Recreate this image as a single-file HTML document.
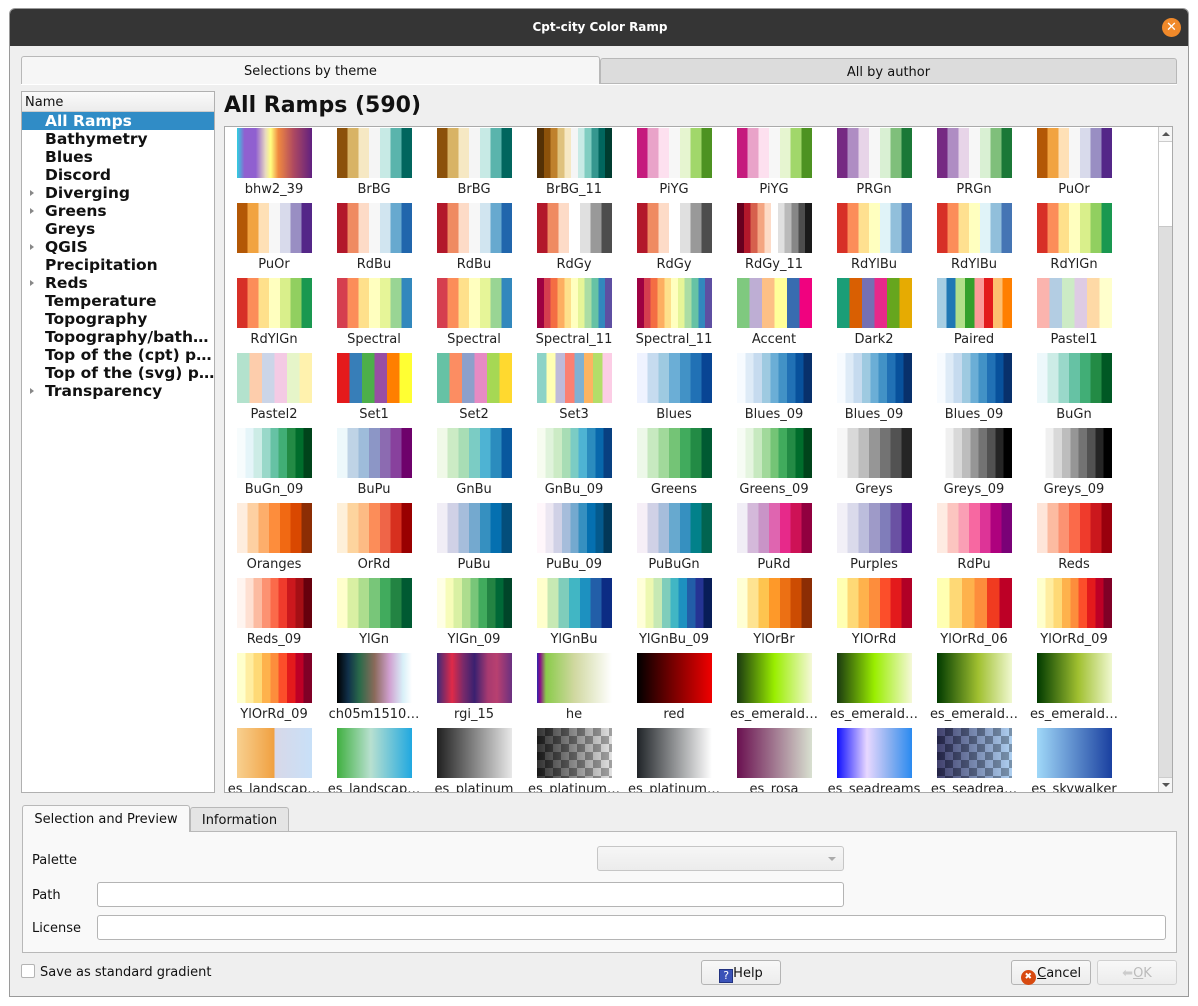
<!DOCTYPE html>
<html><head><meta charset="utf-8">
<style>
*{box-sizing:border-box;margin:0;padding:0}
body{width:1198px;height:1006px;background:#fff;font-family:"DejaVu Sans","Liberation Sans",sans-serif;font-size:13px;color:#111;position:relative;overflow:hidden}
.abs{position:absolute}
#win{left:9px;top:8px;width:1180px;height:989px;background:#efefef;border:1px solid #9a9a9a;border-radius:6px 6px 0 0;overflow:hidden}
#title{left:0;top:0;width:1180px;height:37px;background:#353535;color:#fff;font-weight:bold;font-size:12px;text-align:center;line-height:36px}
#close{left:1152px;top:9px;width:19px;height:19px;border-radius:50%;background:#f0892a;color:#fff;font-size:13px;line-height:19px;text-align:center;font-weight:bold}
.tab{border:1px solid #b8b8b8;border-bottom:none;border-radius:3px 3px 0 0;text-align:center;font-size:13px}
.tree{left:21px;top:91px;width:194px;height:702px;background:#fff;border:1px solid #b0b0b0}
.tree .hd{height:20px;border-bottom:1px solid #ccc;background:linear-gradient(#fafafa,#ececec);padding-left:3px;line-height:21px;font-size:13px}
.tree .it{height:18px;line-height:19px;font-weight:bold;font-size:15.5px;padding-left:23px;position:relative;white-space:nowrap}
.tree .it.sel{background:#308cc6;color:#fff}
.tree .arr{position:absolute;left:8px;top:6px;width:0;height:0;border-left:4px solid #888;border-top:3.5px solid transparent;border-bottom:3.5px solid transparent}
#grid{left:224px;top:126px;width:949px;height:667px;background:#fff;border:1px solid #aaa;overflow:hidden}
.sw{position:absolute;width:75px;height:50px}
.lb{position:absolute;width:100px;text-align:center;font-size:13px;white-space:nowrap;line-height:16px;color:#222}
#sb{left:933px;top:0;width:15px;height:665px;background:#dedede;border-left:1px solid #c8c8c8}
.inp{background:#fff;border:1px solid #b4b4b4;border-radius:3px}
.btn{border:1px solid #b4b4b4;border-radius:3px;background:linear-gradient(#f8f8f8,#ececec);font-size:13px;text-align:center;line-height:25px}
</style></head><body>
<div id="win" class="abs">
 <div id="title" class="abs">Cpt-city Color Ramp</div>
 <div id="close" class="abs">✕</div>
</div>
<div class="abs tab" style="left:21px;top:56px;width:579px;height:28px;background:#f6f6f6;line-height:29px">Selections by theme</div>
<div class="abs tab" style="left:600px;top:58px;width:577px;height:26px;background:#dcdcdc;line-height:27px;border-bottom:1px solid #b8b8b8">All by author</div>
<div class="abs" style="left:21px;top:84px;width:1156px;height:1px;background:#fff"></div>

<div class="abs tree">
 <div class="hd">Name</div>
 <div class="it sel">All Ramps</div>
 <div class="it">Bathymetry</div>
 <div class="it">Blues</div>
 <div class="it">Discord</div>
 <div class="it"><span class="arr"></span>Diverging</div>
 <div class="it"><span class="arr"></span>Greens</div>
 <div class="it">Greys</div>
 <div class="it"><span class="arr"></span>QGIS</div>
 <div class="it">Precipitation</div>
 <div class="it"><span class="arr"></span>Reds</div>
 <div class="it">Temperature</div>
 <div class="it">Topography</div>
 <div class="it">Topography/bath…</div>
 <div class="it">Top of the (cpt) p…</div>
 <div class="it">Top of the (svg) p…</div>
 <div class="it"><span class="arr"></span>Transparency</div>
</div>
<div class="abs" style="left:224px;top:91px;font-size:22px;font-weight:bold;line-height:30px">All Ramps (590)</div>

<div id="grid" class="abs">
 <div id="cells"></div>
 <div id="sb" class="abs">
  <div class="abs" style="left:0;top:0;width:14px;height:15px;background:#f6f6f6;border-bottom:1px solid #ccc"><div class="abs" style="left:3px;top:5px;border-bottom:4px solid #555;border-left:4px solid transparent;border-right:4px solid transparent"></div></div>
  <div class="abs" style="left:0;top:15px;width:14px;height:85px;background:#fff;border-bottom:1px solid #c8c8c8"></div>
  <div class="abs" style="left:0;top:650px;width:14px;height:15px;background:#f6f6f6;border-top:1px solid #ccc"><div class="abs" style="left:3px;top:5px;border-top:4px solid #555;border-left:4px solid transparent;border-right:4px solid transparent"></div></div>
 </div>
</div>

<div id="labels" class="abs" style="left:224px;top:129px;width:932px;height:663px;overflow:hidden">
<div class="lb" style="left:0px;top:53px">bhw2_39</div><div class="lb" style="left:100px;top:53px">BrBG</div><div class="lb" style="left:200px;top:53px">BrBG</div><div class="lb" style="left:300px;top:53px">BrBG_11</div><div class="lb" style="left:400px;top:53px">PiYG</div><div class="lb" style="left:500px;top:53px">PiYG</div><div class="lb" style="left:600px;top:53px">PRGn</div><div class="lb" style="left:700px;top:53px">PRGn</div><div class="lb" style="left:800px;top:53px">PuOr</div>
<div class="lb" style="left:0px;top:128px">PuOr</div><div class="lb" style="left:100px;top:128px">RdBu</div><div class="lb" style="left:200px;top:128px">RdBu</div><div class="lb" style="left:300px;top:128px">RdGy</div><div class="lb" style="left:400px;top:128px">RdGy</div><div class="lb" style="left:500px;top:128px">RdGy_11</div><div class="lb" style="left:600px;top:128px">RdYlBu</div><div class="lb" style="left:700px;top:128px">RdYlBu</div><div class="lb" style="left:800px;top:128px">RdYlGn</div>
<div class="lb" style="left:0px;top:203px">RdYlGn</div><div class="lb" style="left:100px;top:203px">Spectral</div><div class="lb" style="left:200px;top:203px">Spectral</div><div class="lb" style="left:300px;top:203px">Spectral_11</div><div class="lb" style="left:400px;top:203px">Spectral_11</div><div class="lb" style="left:500px;top:203px">Accent</div><div class="lb" style="left:600px;top:203px">Dark2</div><div class="lb" style="left:700px;top:203px">Paired</div><div class="lb" style="left:800px;top:203px">Pastel1</div>
<div class="lb" style="left:0px;top:278px">Pastel2</div><div class="lb" style="left:100px;top:278px">Set1</div><div class="lb" style="left:200px;top:278px">Set2</div><div class="lb" style="left:300px;top:278px">Set3</div><div class="lb" style="left:400px;top:278px">Blues</div><div class="lb" style="left:500px;top:278px">Blues_09</div><div class="lb" style="left:600px;top:278px">Blues_09</div><div class="lb" style="left:700px;top:278px">Blues_09</div><div class="lb" style="left:800px;top:278px">BuGn</div>
<div class="lb" style="left:0px;top:353px">BuGn_09</div><div class="lb" style="left:100px;top:353px">BuPu</div><div class="lb" style="left:200px;top:353px">GnBu</div><div class="lb" style="left:300px;top:353px">GnBu_09</div><div class="lb" style="left:400px;top:353px">Greens</div><div class="lb" style="left:500px;top:353px">Greens_09</div><div class="lb" style="left:600px;top:353px">Greys</div><div class="lb" style="left:700px;top:353px">Greys_09</div><div class="lb" style="left:800px;top:353px">Greys_09</div>
<div class="lb" style="left:0px;top:428px">Oranges</div><div class="lb" style="left:100px;top:428px">OrRd</div><div class="lb" style="left:200px;top:428px">PuBu</div><div class="lb" style="left:300px;top:428px">PuBu_09</div><div class="lb" style="left:400px;top:428px">PuBuGn</div><div class="lb" style="left:500px;top:428px">PuRd</div><div class="lb" style="left:600px;top:428px">Purples</div><div class="lb" style="left:700px;top:428px">RdPu</div><div class="lb" style="left:800px;top:428px">Reds</div>
<div class="lb" style="left:0px;top:503px">Reds_09</div><div class="lb" style="left:100px;top:503px">YlGn</div><div class="lb" style="left:200px;top:503px">YlGn_09</div><div class="lb" style="left:300px;top:503px">YlGnBu</div><div class="lb" style="left:400px;top:503px">YlGnBu_09</div><div class="lb" style="left:500px;top:503px">YlOrBr</div><div class="lb" style="left:600px;top:503px">YlOrRd</div><div class="lb" style="left:700px;top:503px">YlOrRd_06</div><div class="lb" style="left:800px;top:503px">YlOrRd_09</div>
<div class="lb" style="left:0px;top:578px">YlOrRd_09</div><div class="lb" style="left:100px;top:578px">ch05m1510…</div><div class="lb" style="left:200px;top:578px">rgi_15</div><div class="lb" style="left:300px;top:578px">he</div><div class="lb" style="left:400px;top:578px">red</div><div class="lb" style="left:500px;top:578px">es_emerald…</div><div class="lb" style="left:600px;top:578px">es_emerald…</div><div class="lb" style="left:700px;top:578px">es_emerald…</div><div class="lb" style="left:800px;top:578px">es_emerald…</div>
<div class="lb" style="left:0px;top:653px">es_landscap…</div><div class="lb" style="left:100px;top:653px">es_landscap…</div><div class="lb" style="left:200px;top:653px">es_platinum</div><div class="lb" style="left:300px;top:653px">es_platinum…</div><div class="lb" style="left:400px;top:653px">es_platinum…</div><div class="lb" style="left:500px;top:653px">es_rosa</div><div class="lb" style="left:600px;top:653px">es_seadreams</div><div class="lb" style="left:700px;top:653px">es_seadrea…</div><div class="lb" style="left:800px;top:653px">es_skywalker</div>
</div>

<div class="abs tab" style="left:22px;top:805px;width:168px;height:27px;background:#f9f9f9;line-height:27px">Selection and Preview</div>
<div class="abs tab" style="left:190px;top:807px;width:99px;height:25px;background:#e4e4e4;line-height:26px">Information</div>
<div class="abs" style="left:22px;top:831px;width:1155px;height:122px;background:#f9f9f9;border:1px solid #b8b8b8"></div>
<div class="abs" style="left:23px;top:831px;width:166px;height:2px;background:#f9f9f9"></div>
<div class="abs" style="left:32px;top:853px">Palette</div>
<div class="abs" style="left:597px;top:846px;width:247px;height:25px;border:1px solid #c6c6c6;border-radius:3px;background:linear-gradient(#f6f6f6,#ececec)"><div class="abs" style="left:230px;top:10px;border-top:4px solid #aaa;border-left:4px solid transparent;border-right:4px solid transparent"></div></div>
<div class="abs" style="left:32px;top:888px">Path</div>
<div class="abs inp" style="left:97px;top:882px;width:747px;height:25px"></div>
<div class="abs" style="left:32px;top:921px">License</div>
<div class="abs inp" style="left:97px;top:915px;width:1069px;height:25px"></div>
<div class="abs" style="left:21px;top:964px;width:14px;height:14px;border:1px solid #b4b4b4;background:#fff;border-radius:2px"></div>
<div class="abs" style="left:40px;top:965px">Save as standard gradient</div>
<div class="abs btn" style="left:701px;top:960px;width:80px;height:25px"><span style="display:inline-block;width:14px;height:14px;background:#3a52b8;border:1px solid #223380;color:#fff;font-size:11px;line-height:12px;vertical-align:-2px">?</span>Help</div>
<div class="abs btn" style="left:1011px;top:960px;width:80px;height:25px"><span style="display:inline-block;width:15px;height:15px;border-radius:50%;background:#d84a10;color:#fff;font-size:9px;line-height:15px;vertical-align:-2px;font-weight:bold">✖</span>&#8202;<u>C</u>ancel</div>
<div class="abs btn" style="left:1097px;top:960px;width:80px;height:25px;color:#bbb;border-color:#d0d0d0"><span style="color:#ccc">⬅</span><u>O</u>K</div>

<script>
var P={
BrBG:"8c510a d8b365 f6e8c3 f5f5f5 c7eae5 5ab4ac 01665e",
BrBG11:"543005 8c510a bf812d dfc27d f6e8c3 f5f5f5 c7eae5 80cdc1 35978f 01665e 003c30",
PiYG:"c51b7d e9a3c9 fde0ef f7f7f7 e6f5d0 a1d76a 4d9221",
PRGn:"762a83 af8dc3 e7d4e8 f7f7f7 d9f0d3 7fbf7b 1b7837",
PuOr:"b35806 f1a340 fee0b6 f7f7f7 d8daeb 998ec3 542788",
RdBu:"b2182b ef8a62 fddbc7 f7f7f7 d1e5f0 67a9cf 2166ac",
RdGy:"b2182b ef8a62 fddbc7 ffffff e0e0e0 999999 4d4d4d",
RdGy11:"67001f b2182b d6604d f4a582 fddbc7 ffffff e0e0e0 bababa 878787 4d4d4d 1a1a1a",
RdYlBu:"d73027 fc8d59 fee090 ffffbf e0f3f8 91bfdb 4575b4",
RdYlGn:"d73027 fc8d59 fee08b ffffbf d9ef8b 91cf60 1a9850",
Spectral:"d53e4f fc8d59 fee08b ffffbf e6f598 99d594 3288bd",
Spectral11:"9e0142 d53e4f f46d43 fdae61 fee08b ffffbf e6f598 abdda4 66c2a5 3288bd 5e4fa2",
Accent:"7fc97f beaed4 fdc086 ffff99 386cb0 f0027f",
Dark2:"1b9e77 d95f02 7570b3 e7298a 66a61e e6ab02",
Paired:"a6cee3 1f78b4 b2df8a 33a02c fb9a99 e31a1c fdbf6f ff7f00",
Pastel1:"fbb4ae b3cde3 ccebc5 decbe4 fed9a6 ffffcc",
Pastel2:"b3e2cd fdcdac cbd5e8 f4cae4 e6f5c9 fff2ae",
Set1:"e41a1c 377eb8 4daf4a 984ea3 ff7f00 ffff33",
Set2:"66c2a5 fc8d62 8da0cb e78ac3 a6d854 ffd92f",
Set3:"8dd3c7 ffffb3 bebada fb8072 80b1d3 fdb462 b3de69 fccde5",
Blues:"eff3ff c6dbef 9ecae1 6baed6 4292c6 2171b5 084594",
Blues9:"f7fbff deebf7 c6dbef 9ecae1 6baed6 4292c6 2171b5 08519c 08306b",
BuGn:"edf8fb ccece6 99d8c9 66c2a4 41ae76 238b45 005824",
BuGn9:"f7fcfd e5f5f9 ccece6 99d8c9 66c2a4 41ae76 238b45 006d2c 00441b",
BuPu:"edf8fb bfd3e6 9ebcda 8c96c6 8c6bb1 88419d 6e016b",
GnBu:"f0f9e8 ccebc5 a8ddb5 7bccc4 4eb3d3 2b8cbe 08589e",
GnBu9:"f7fcf0 e0f3db ccebc5 a8ddb5 7bccc4 4eb3d3 2b8cbe 0868ac 084081",
Greens:"edf8e9 c7e9c0 a1d99b 74c476 41ab5d 238b45 005a32",
Greens9:"f7fcf5 e5f5e0 c7e9c0 a1d99b 74c476 41ab5d 238b45 006d2c 00441b",
Greys:"f7f7f7 d9d9d9 bdbdbd 969696 737373 525252 252525",
Greys9:"ffffff f0f0f0 d9d9d9 bdbdbd 969696 737373 525252 252525 000000",
Oranges:"feedde fdd0a2 fdae6b fd8d3c f16913 d94801 8c2d04",
OrRd:"fef0d9 fdd49e fdbb84 fc8d59 ef6548 d7301f 990000",
PuBu:"f1eef6 d0d1e6 a6bddb 74a9cf 3690c0 0570b0 034e7b",
PuBu9:"fff7fb ece7f2 d0d1e6 a6bddb 74a9cf 3690c0 0570b0 045a8d 023858",
PuBuGn:"f6eff7 d0d1e6 a6bddb 67a9cf 3690c0 02818a 016450",
PuRd:"f1eef6 d4b9da c994c7 df65b0 e7298a ce1256 91003f",
Purples:"f2f0f7 dadaeb bcbddc 9e9ac8 807dba 6a51a3 4a1486",
RdPu:"feebe2 fcc5c0 fa9fb5 f768a1 dd3497 ae017e 7a0177",
Reds:"fee5d9 fcbba1 fc9272 fb6a4a ef3b2c cb181d 99000d",
Reds9:"fff5f0 fee0d2 fcbba1 fc9272 fb6a4a ef3b2c cb181d a50f15 67000d",
YlGn:"ffffcc d9f0a3 addd8e 78c679 41ab5d 238443 005a32",
YlGn9:"ffffe5 f7fcb9 d9f0a3 addd8e 78c679 41ab5d 238443 006837 004529",
YlGnBu:"ffffcc c7e9b4 7fcdbb 41b6c4 1d91c0 225ea8 0c2c84",
YlGnBu9:"ffffd9 edf8b1 c7e9b4 7fcdbb 41b6c4 1d91c0 225ea8 253494 081d58",
YlOrBr:"ffffd4 fee391 fec44f fe9929 ec7014 cc4c02 8c2d04",
YlOrRd:"ffffb2 fed976 feb24c fd8d3c fc4e2a e31a1c b10026",
YlOrRd6:"ffffb2 fed976 feb24c fd8d3c f03b20 bd0026",
YlOrRd9:"ffffcc ffeda0 fed976 feb24c fd8d3c fc4e2a e31a1c bd0026 800026"};
function stripes(s){var c=s.split(" "),n=c.length,a=[];for(var i=0;i<n;i++){a.push("#"+c[i]+" "+(i*100/n)+"% "+((i+1)*100/n)+"%");}return "linear-gradient(90deg,"+a.join(",")+")";}
var chk="repeating-conic-gradient(rgba(0,0,0,.28) 0 25%,rgba(255,255,255,.08) 0 50%) 0 0/16px 16px,";
var S={
bhw:"linear-gradient(90deg,#30d0e0,#9060d0 10%,#9060d0 25%,#e8d8c0 38%,#ffff80 45%,#f08a40 55%,#b04a60 75%,#602080)",
ch:"linear-gradient(90deg,#000,#10304a 15%,#2a6a4a 30%,#8a6a5a 50%,#d0a0d0 70%,#d8f0f8 88%,#fff)",
rgi:"linear-gradient(90deg,#3a2a7a,#e02a48 20%,#7a2a6a 35%,#3a2070 50%,#a83a70 68%,#b84070 80%,#6a3080)",
he:"linear-gradient(90deg,#2a2aaa,#8a0a8a 4%,#8acb4a 12%,#d0d8a0 50%,#fff)",
red:"linear-gradient(90deg,#000,#700000 45%,#f00000)",
em1:"linear-gradient(90deg,#1a3a10,#9aee00 50%,#f5f8d8)",
em2:"linear-gradient(90deg,#003a00,#a0c030 55%,#f0f8d0)",
ls1:"linear-gradient(90deg,#f8d090,#f0a040 50%,#d8d8e8 50%,#c8e0f8)",
ls2:"linear-gradient(90deg,#40b040,#b8e0d0 45%,#20a8e0)",
pl1:"linear-gradient(90deg,#202020,#e8e8e8)",
pl2:chk+"linear-gradient(90deg,#202020,#e0e0e0)",
pl3:"linear-gradient(90deg,#202428,#fff)",
rosa:"linear-gradient(90deg,#6a1050,#d8e0d0)",
sd1:"linear-gradient(90deg,#1010ff,#e8d8ff 40%,#8ab0f0 70%,#2a8af0)",
sd2:chk+"linear-gradient(90deg,#303060,#a8ccf0)",
sky:"linear-gradient(90deg,#a0d8f8,#1a40a0)"};
var L=[["*bhw","BrBG","BrBG","BrBG11","PiYG","PiYG","PRGn","PRGn","PuOr"],
["PuOr","RdBu","RdBu","RdGy","RdGy","RdGy11","RdYlBu","RdYlBu","RdYlGn"],
["RdYlGn","Spectral","Spectral","Spectral11","Spectral11","Accent","Dark2","Paired","Pastel1"],
["Pastel2","Set1","Set2","Set3","Blues","Blues9","Blues9","Blues9","BuGn"],
["BuGn9","BuPu","GnBu","GnBu9","Greens","Greens9","Greys","Greys9","Greys9"],
["Oranges","OrRd","PuBu","PuBu9","PuBuGn","PuRd","Purples","RdPu","Reds"],
["Reds9","YlGn","YlGn9","YlGnBu","YlGnBu9","YlOrBr","YlOrRd","YlOrRd6","YlOrRd9"],
["YlOrRd9","*ch","*rgi","*he","*red","*em1","*em1","*em2","*em2"],
["*ls1","*ls2","*pl1","*pl2","*pl3","*rosa","*sd1","*sd2","*sky"]];
var h="";
for(var r=0;r<9;r++)for(var c=0;c<9;c++){var k=L[r][c],bg=k[0]=="*"?S[k.slice(1)]:stripes(P[k]);
h+='<div class="sw" style="left:'+(12+c*100)+'px;top:'+(1+r*75)+'px;background:'+bg+'"></div>';}
document.getElementById("cells").innerHTML=h;
</script>
</body></html>
